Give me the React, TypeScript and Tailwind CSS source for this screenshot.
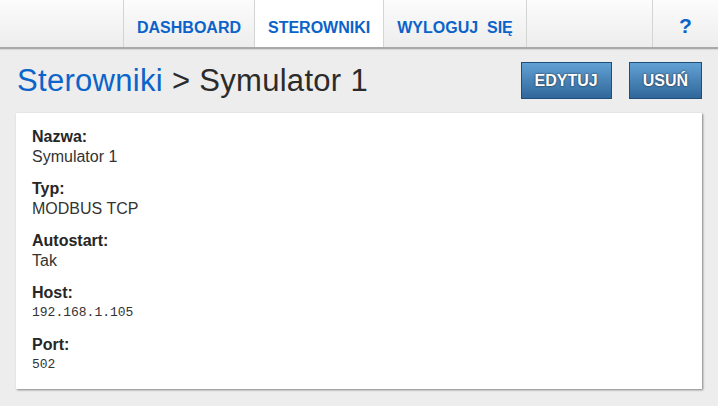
import React from 'react';

interface Field {
  label: string;
  value: string;
  mono?: boolean;
}

const FIELDS: Field[] = [
  { label: 'Nazwa:', value: 'Symulator 1' },
  { label: 'Typ:', value: 'MODBUS TCP' },
  { label: 'Autostart:', value: 'Tak' },
  { label: 'Host:', value: '192.168.1.105', mono: true },
  { label: 'Port:', value: '502', mono: true },
];

const NavItem: React.FC<{ label: React.ReactNode; active?: boolean }> = ({ label, active }) => (
  <a
    href="#"
    className={
      'flex items-center h-full pt-2 px-[13px] border-r border-[#d4d4d4] text-[16px] font-bold text-[#0b63c9] ' +
      (active ? 'bg-white' : '')
    }
  >
    {label}
  </a>
);

const Button: React.FC<{ children: React.ReactNode }> = ({ children }) => (
  <button className="h-[37px] px-[13px] border border-[#1f4f78] bg-gradient-to-b from-[#62a1d4] to-[#30679a] text-white text-[16px] font-bold [text-shadow:0_0_2px_rgba(0,0,0,0.8)]">
    {children}
  </button>
);

const App: React.FC = () => {
  return (
    <div className="min-h-[406px] bg-[#ededed] font-['Liberation_Sans',Arial,sans-serif]">
      <nav className="flex h-[49px] bg-gradient-to-b from-[#fcfcfc] to-[#ededed] border-b-2 border-[#a9a9a9] shadow-[0_1px_1px_rgba(0,0,0,0.08)]">
        <div className="w-[124px] border-r border-[#d4d4d4]" />
        <NavItem label="DASHBOARD" />
        <NavItem label="STEROWNIKI" active />
        <NavItem label={<>WYLOGUJ&nbsp; SIĘ</>} />
        <div className="flex-1 border-r border-[#d4d4d4]" />
        <a href="#" className="flex items-center justify-center pt-1 w-[65px] text-[21px] font-bold text-[#0b63c9]">
          ?
        </a>
      </nav>

      <div className="px-4">
        <div className="flex items-center justify-between mt-[13px] mb-[14px]">
          <h1 className="text-[31px] tracking-[0.3px] leading-[37px] text-[#2b2b2b] pl-px">
            <a href="#" className="text-[#0b64c9]">Sterowniki</a> &gt; Symulator 1
          </h1>
          <div className="flex gap-[17px]">
            <Button>EDYTUJ</Button>
            <Button>USUŃ</Button>
          </div>
        </div>

        <div className="bg-white px-4 py-[14px] flex flex-col gap-3 shadow-[1px_1px_2px_rgba(0,0,0,0.45)]">
          {FIELDS.map((f) => (
            <div key={f.label} className="leading-[20px]">
              <div className="text-[16px] font-bold text-[#262626]">{f.label}</div>
              <div
                className={
                  f.mono
                    ? "text-[13px] text-[#333] font-['Liberation_Mono','Courier_New',monospace]"
                    : 'text-[16px] text-[#333]'
                }
              >
                {f.value}
              </div>
            </div>
          ))}
        </div>
      </div>
    </div>
  );
};

export default App;
